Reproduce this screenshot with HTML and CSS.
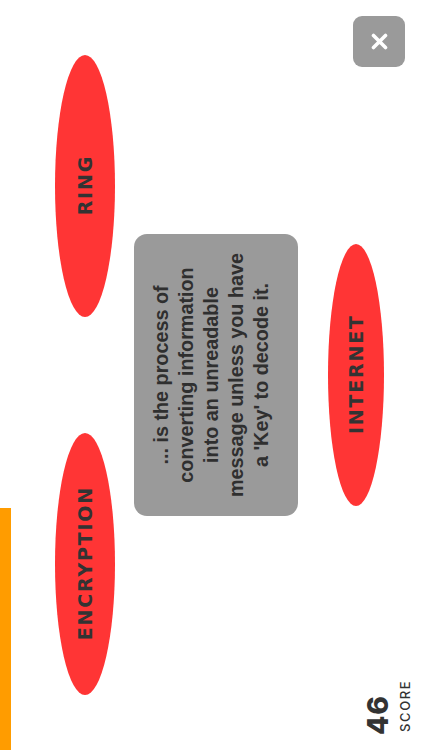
FILE: index.html
```html
<!DOCTYPE html>
<html lang="en">
<head>
<meta charset="utf-8">
<title>Quiz</title>
<link rel="stylesheet" href="styles.css">
</head>
<body>
<div class="screen">
  <div class="stage">
    <div class="progress"><div class="progress-fill" style="width:242px"></div></div>
    <div class="options-row">
      <div class="option"><span class="option-label">ENCRYPTION</span></div>
      <div class="option"><span class="option-label">RING</span></div>
    </div>
    <div class="question">
      <p class="question-text">... is the process of<br>converting information<br>into an unreadable<br>message unless you have<br>a 'Key' to decode it.</p>
    </div>
    <div class="option option-single"><span class="option-label">INTERNET</span></div>
    <div class="score">
      <span class="score-value">46</span>
      <span class="score-label">SCORE</span>
    </div>
    <button class="close" aria-label="Close">
      <svg width="17" height="17" viewBox="0 0 17 17"><path d="M2.5 2.5 L14.5 14.5 M14.5 2.5 L2.5 14.5" stroke="#fff" stroke-width="3.6" stroke-linecap="round" fill="none"/></svg>
    </button>
  </div>
</div>
</body>
</html>
```
FILE: styles.css
```css
html, body {
  margin: 0;
  padding: 0;
  background: #ffffff;
  overflow: hidden;
}
.screen {
  width: 422px;
  height: 750px;
  overflow: hidden;
  position: relative;
}
.stage {
  width: 750px;
  height: 422px;
  position: relative;
  transform-origin: 0 0;
  transform: translateY(750px) rotate(-90deg);
  display: flex;
  flex-direction: column;
  align-items: center;
  font-family: Inter, "Liberation Sans", sans-serif;
}
.progress {
  align-self: stretch;
  height: 11px;
}
.progress-fill {
  height: 11px;
  background: #ff9c00;
}
.options-row {
  margin-top: 44px;
  display: flex;
  gap: 116px;
  align-self: flex-start;
  padding-left: 55px;
}
.option {
  width: 262px;
  height: 60px;
  border-radius: 50%;
  background: #ff3535;
  display: flex;
  align-items: center;
  justify-content: center;
}
.option-single {
  margin-top: 30px;
  height: 56px;
}
.option-label {
  font-family: "DejaVu Sans", Verdana, sans-serif;
  font-weight: 700;
  font-size: 19px;
  letter-spacing: 1.8px;
  padding-left: 1.8px;
  color: #333333;
  line-height: 1;
}
.question {
  margin-top: 19px;
  width: 282px;
  height: 164px;
  border-radius: 13px;
  background: #9a9a9a;
  display: flex;
  align-items: center;
  justify-content: center;
  box-sizing: border-box;
  padding-bottom: 10px;
}
.question-text {
  margin: 0;
  font-family: "Liberation Sans", Arial, sans-serif;
  font-weight: 700;
  font-size: 19.8px;
  line-height: 25px;
  text-align: center;
  color: #2f2f2f;
}
.score {
  position: absolute;
  left: 15px;
  top: 363px;
  display: flex;
  flex-direction: column;
  color: #333333;
}
.score-value {
  font-weight: 800;
  font-size: 28px;
  line-height: 30px;
  letter-spacing: 1px;
}
.score-label {
  margin-top: 5px;
  font-weight: 500;
  font-size: 13px;
  line-height: 14px;
  letter-spacing: 1.6px;
  padding-left: 3px;
}
.close {
  position: absolute;
  right: 16px;
  bottom: 17px;
  width: 51px;
  height: 52px;
  border: none;
  border-radius: 9px;
  background: #9a9a9a;
  padding: 0;
  display: flex;
  align-items: center;
  justify-content: center;
}
.close svg {
  display: block;
}
```
